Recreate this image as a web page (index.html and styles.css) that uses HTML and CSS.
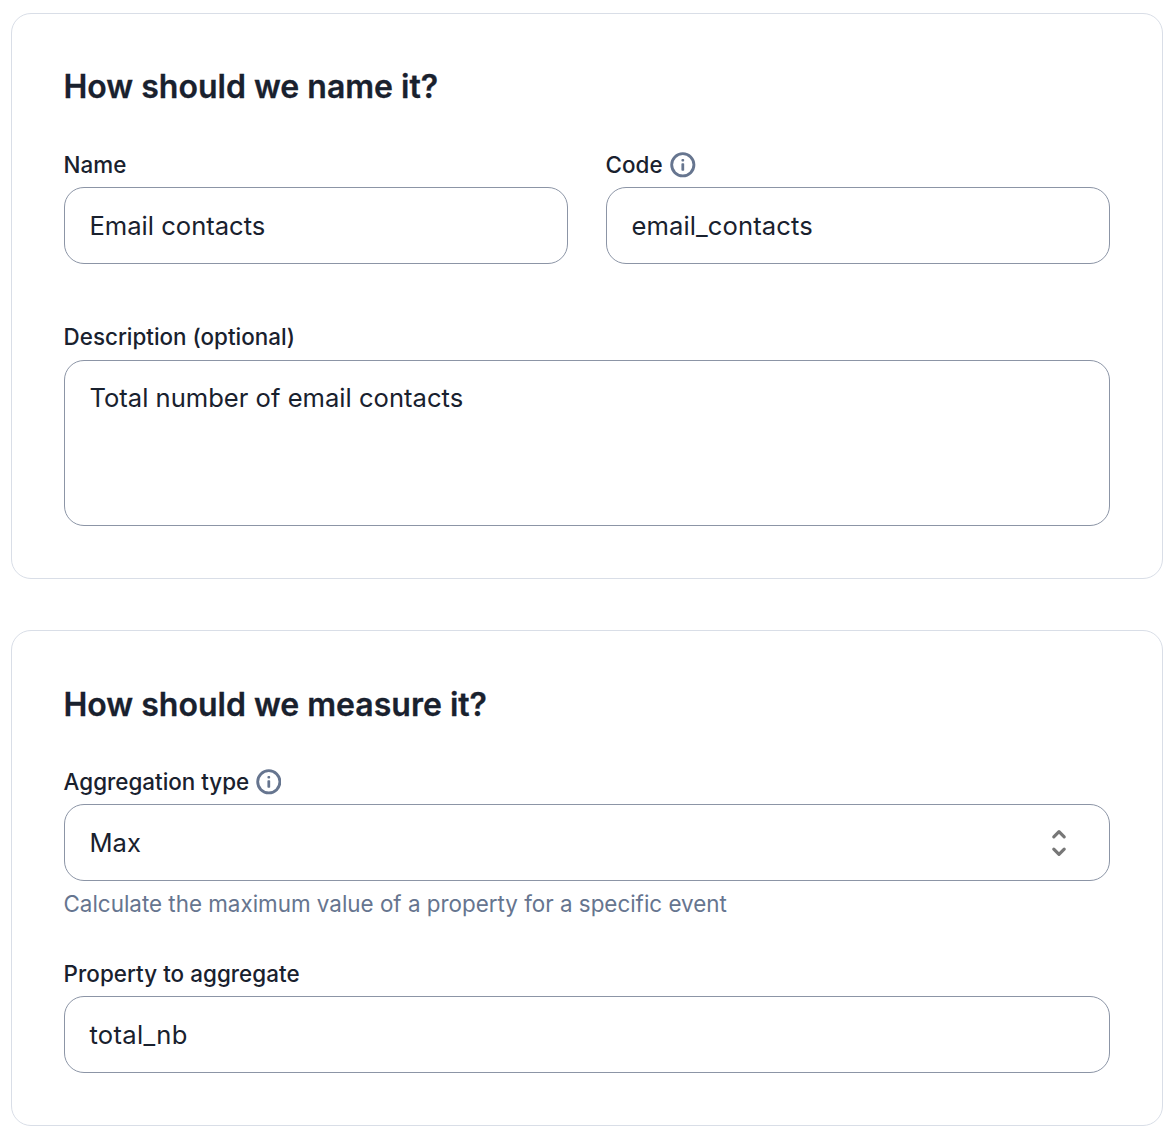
FILE: index.html
```html
<!DOCTYPE html>
<html lang="en">
<head>
<meta charset="utf-8">
<title>Metric settings</title>
<link rel="stylesheet" href="styles.css">
</head>
<body>
<main class="page">
  <section class="card">
    <h2 class="title">How should we name it?</h2>
    <div class="row">
      <div class="field">
        <div class="label">Name</div>
        <div class="control">Email contacts</div>
      </div>
      <div class="field">
        <div class="label">Code
          <svg class="info" viewBox="0 0 26 26" fill="none"><circle cx="13" cy="13" r="11.3" stroke="currentColor" stroke-width="2.9"/><rect x="11.6" y="7" width="2.8" height="2.6" rx="1" fill="currentColor"/><rect x="11.6" y="11.5" width="2.8" height="7.5" rx=".8" fill="currentColor"/></svg>
        </div>
        <div class="control code">email_contacts</div>
      </div>
    </div>
    <div class="field description">
      <div class="label">Description (optional)</div>
      <div class="control area">Total number of email contacts</div>
    </div>
  </section>
  <section class="card measure">
    <h2 class="title">How should we measure it?</h2>
    <div class="field">
      <div class="label">Aggregation type
        <svg class="info" viewBox="0 0 26 26" fill="none"><circle cx="13" cy="13" r="11.3" stroke="currentColor" stroke-width="2.9"/><rect x="11.6" y="7" width="2.8" height="2.6" rx="1" fill="currentColor"/><rect x="11.6" y="11.5" width="2.8" height="7.5" rx=".8" fill="currentColor"/></svg>
      </div>
      <div class="control select">Max
        <svg class="chevrons" viewBox="0 0 16 28" fill="none" stroke="currentColor" stroke-width="3.2" stroke-linecap="round" stroke-linejoin="round"><path d="M2.8 7.8l5.2-5.2 5.2 5.2M2.8 20.2l5.2 5.2 5.2-5.2"/></svg>
      </div>
      <p class="hint">Calculate the maximum value of a property for a specific event</p>
    </div>
    <div class="field property">
      <div class="label">Property to aggregate</div>
      <div class="control property-name">total_nb</div>
    </div>
  </section>
</main>
</body>
</html>
```
FILE: styles.css
```css
* { box-sizing: border-box; }
body { margin: 0; background: #fff; color: #19212e; font-family: Inter, "Liberation Sans", sans-serif; }
.page { width: 1152px; margin-left: 11px; padding-top: 13px; }
.card { height: 566px; padding: 52px; border: 1px solid #d9dee7; border-radius: 20px; }
.measure { height: 496px; margin-top: 51px; }
.title { margin: 0 0 0 -0.5px; height: 86px; font-size: 32px; line-height: 42px; font-weight: 600; -webkit-text-stroke: 0.3px currentColor; }
.measure .title { line-height: 44px; }
.row { display: grid; grid-template-columns: 504px 504px; gap: 38px; }
.label { display: flex; align-items: center; gap: 7.4px; height: 35px; margin-left: -0.4px; padding-bottom: 9px; font-size: 22.4px; line-height: 26px; font-weight: 500; white-space: nowrap; }
.info { width: 25.6px; height: 25.6px; color: #66758f; }
.control { height: 77px; padding: 0 24.4px; border: 1px solid #8c95a6; border-radius: 20px; font-size: 25.6px; line-height: 76px; }
.code { letter-spacing: 0.1px; }
.property-name { letter-spacing: 0.3px; }
.description { margin-top: 61px; }
.description .label { padding-bottom: 11px; }
.area { height: 166px; padding-top: 18px; line-height: 38px; }
.select { display: flex; align-items: center; justify-content: space-between; padding-right: 42px; }
.chevrons { width: 16px; height: 28px; color: #777; }
.hint { margin: 7px 0 0 -0.5px; font-size: 22.4px; line-height: 32px; color: #66758f; }
.measure .info { margin-left: -0.8px; }
.property { margin-top: 41px; }
.property .label { letter-spacing: 0.05px; }
```
